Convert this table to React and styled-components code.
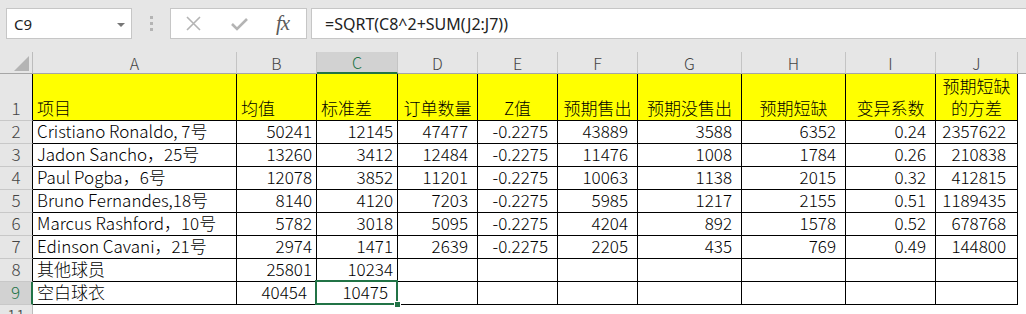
import React from 'react';
import styled, { createGlobalStyle, css } from 'styled-components';

const GREEN = '#217346';

const GlobalStyle = createGlobalStyle`
    html, body {
        margin: 0;
        padding: 0;
        background: #ffffff;
    }
    body {
        font-family: 'Noto Sans CJK SC', 'Noto Sans', sans-serif;
    }
`;

const Page = styled.div`
    width: 1026px;
    height: 314px;
    overflow: hidden;
    background: #ffffff;
`;

const FormulaBar = styled.div`
    height: 52px;
    box-sizing: border-box;
    padding: 8px 0 0 6px;
    background: #e6e6e6;
    display: flex;
    align-items: flex-start;
`;

const NameBox = styled.div`
    width: 126px;
    height: 31px;
    box-sizing: border-box;
    background: #ffffff;
    border: 1px solid #c6c6c6;
    display: flex;
    align-items: center;
    justify-content: space-between;
    padding: 0 6px 0 7px;
    font-family: 'Noto Sans', 'Open Sans', sans-serif;
    font-size: 15px;
    color: #222;
`;

const Caret = styled.span`
    width: 0;
    height: 0;
    border-left: 4px solid transparent;
    border-right: 4px solid transparent;
    border-top: 4px solid #777;
    margin-top: 2px;
`;

const Grip = styled.div`
    width: 38px;
    height: 31px;
    display: flex;
    flex-direction: column;
    align-items: center;
    justify-content: center;
    gap: 3px;
    span {
        width: 3px;
        height: 3px;
        background: #b4b4b4;
    }
`;

const ButtonBox = styled.div`
    width: 137px;
    height: 31px;
    box-sizing: border-box;
    background: #ffffff;
    border: 1px solid #c6c6c6;
    display: flex;
    align-items: center;
    padding-left: 15px;
    gap: 30px;
`;

const Fx = styled.span`
    font-family: 'Liberation Serif', serif;
    font-style: italic;
    font-size: 21px;
    line-height: 21px;
    color: #5a5a5a;
    letter-spacing: -1px;
    margin-left: -2px;
`;

const FormulaInput = styled.div`
    flex: 1;
    height: 31px;
    margin-left: 4px;
    box-sizing: border-box;
    background: #ffffff;
    border: 1px solid #c6c6c6;
    border-right: none;
    display: flex;
    align-items: center;
    padding-left: 13px;
    font-family: 'Noto Sans', 'Open Sans', sans-serif;
    font-size: 16px;
    color: #222;
`;

const Sheet = styled.div`
    display: grid;
    grid-template-columns: 33px 204px 80px 81px 80px 80px 80px 104px 104px 90px 82px 1fr;
    grid-template-rows: 22px 47px repeat(9, 23px);
    font-size: 17px;
    font-weight: 300;
`;

const Corner = styled.div`
    background: #e6e6e6;
    border-right: 1px solid #bcbcbc;
    border-bottom: 1px solid #a6a6a6;
    box-sizing: border-box;
    display: flex;
    align-items: flex-end;
    justify-content: flex-end;
    padding: 0 3px 2px 0;
    &::after {
        content: '';
        width: 0;
        height: 0;
        border-left: 15px solid transparent;
        border-bottom: 15px solid #b4b4b4;
    }
`;

const ColHeader = styled.div`
    box-sizing: border-box;
    background: ${p => (p.$active ? '#d2d2d2' : '#e6e6e6')};
    color: ${p => (p.$active ? GREEN : '#444')};
    border-right: 1px solid #c4c4c4;
    border-bottom: ${p => (p.$active ? `2px solid ${GREEN}` : '1px solid #a6a6a6')};
    display: flex;
    align-items: center;
    justify-content: center;
    font-size: 16px;
    line-height: 20px;
`;

const RowHeader = styled.div`
    box-sizing: border-box;
    background: ${p => (p.$active ? '#d2d2d2' : '#e6e6e6')};
    color: ${p => (p.$active ? GREEN : '#444')};
    border-bottom: 1px solid #c8c8c8;
    border-right: ${p =>
        p.$active ? `2px solid ${GREEN}` : p.$data ? '1px solid #000' : '1px solid #bcbcbc'};
    display: flex;
    align-items: flex-end;
    justify-content: center;
    line-height: 20px;
    padding-bottom: 2px;
`;

const Cell = styled.div`
    box-sizing: border-box;
    position: relative;
    background: ${p => (p.$yellow ? '#ffff00' : '#ffffff')};
    border-right: 1px solid #000;
    border-bottom: 1px solid #000;
    display: flex;
    align-items: flex-end;
    justify-content: ${p => p.$align};
    text-align: ${p => (p.$align === 'center' ? 'center' : 'left')};
    padding: 0 ${p => p.$pad}px 2px 4px;
    line-height: 20px;
    color: #000;
    white-space: ${p => (p.$wrap ? 'normal' : 'nowrap')};
    ${p =>
        p.$wrap &&
        css`
            line-height: 22px;
            padding: 0 4px 1px 4px;
        `}
    ${p =>
        p.$selected &&
        css`
            &::after {
                content: '';
                position: absolute;
                top: -2px;
                left: -2px;
                right: -1px;
                bottom: -1px;
                border: 2px solid ${GREEN};
                pointer-events: none;
            }
            &::before {
                content: '';
                position: absolute;
                right: -4px;
                bottom: -4px;
                width: 5px;
                height: 5px;
                background: ${GREEN};
                border: 1px solid #fff;
                z-index: 2;
            }
        `}
`;

const Blank = styled.div`
    background: ${p => (p.$header ? '#e6e6e6' : '#ffffff')};
    border-bottom: ${p => (p.$header ? '1px solid #a6a6a6' : 'none')};
    box-sizing: border-box;
`;

const columns = ['A', 'B', 'C', 'D', 'E', 'F', 'G', 'H', 'I', 'J'];
const headers = ['项目', '均值', '标准差', '订单数量', 'Z值', '预期售出', '预期没售出', '预期短缺', '变异系数', '预期短缺的方差'];
const pads = [4, 4, 4, 9, 9, 9, 9, 9, 9, 11];

const z = '-0.2275';
const rows = [
    ['Cristiano Ronaldo, 7号', 50241, 12145, 47477, z, 43889, 3588, 6352, '0.24', 2357622],
    ['Jadon Sancho，25号', 13260, 3412, 12484, z, 11476, 1008, 1784, '0.26', 210838],
    ['Paul Pogba，6号', 12078, 3852, 11201, z, 10063, 1138, 2015, '0.32', 412815],
    ['Bruno Fernandes,18号', 8140, 4120, 7203, z, 5985, 1217, 2155, '0.51', 1189435],
    ['Marcus Rashford，10号', 5782, 3018, 5095, z, 4204, 892, 1578, '0.52', 678768],
    ['Edinson Cavani，21号', 2974, 1471, 2639, z, 2205, 435, 769, '0.49', 144800],
    ['其他球员', 25801, 10234, '', '', '', '', '', '', ''],
    ['空白球衣', 40454, 10475, '', '', '', '', '', '', ''],
];

const CancelIcon = () => (
    <svg width="15" height="15" viewBox="0 0 15 15">
        <path d="M1 1 L14 14 M14 1 L1 14" stroke="#b4b4b4" strokeWidth="1.6" fill="none" />
    </svg>
);

const CheckIcon = () => (
    <svg width="17" height="14" viewBox="0 0 17 14">
        <path d="M1 7 L6 12 L16 2" stroke="#b4b4b4" strokeWidth="2.6" fill="none" />
    </svg>
);

const App = () => {
    return (
        <Page>
            <GlobalStyle />
            <FormulaBar>
                <NameBox>
                    <span>C9</span>
                    <Caret />
                </NameBox>
                <Grip>
                    <span />
                    <span />
                    <span />
                </Grip>
                <ButtonBox>
                    <CancelIcon />
                    <CheckIcon />
                    <Fx>fx</Fx>
                </ButtonBox>
                <FormulaInput>=SQRT(C8^2+SUM(J2:J7))</FormulaInput>
            </FormulaBar>
            <Sheet>
                <Corner />
                {columns.map(c => (
                    <ColHeader key={c} $active={c === 'C'}>
                        {c}
                    </ColHeader>
                ))}
                <Blank $header />

                <RowHeader $data>1</RowHeader>
                {headers.map((h, i) => (
                    <Cell
                        key={h}
                        $yellow
                        $align={i < 3 ? 'flex-start' : 'center'}
                        $pad={4}
                        $wrap={i === 9}
                    >
                        {h}
                    </Cell>
                ))}
                <Blank />

                {rows.map((r, ri) => {
                    const rowNo = ri + 2;
                    return (
                        <React.Fragment key={rowNo}>
                            <RowHeader $data $active={rowNo === 9}>
                                {rowNo}
                            </RowHeader>
                            {r.map((v, ci) => (
                                <Cell
                                    key={ci}
                                    $align={ci === 0 ? 'flex-start' : 'flex-end'}
                                    $pad={rowNo === 9 && ci > 0 ? 9 : pads[ci]}
                                    $selected={rowNo === 9 && ci === 2}
                                >
                                    {v}
                                </Cell>
                            ))}
                            <Blank />
                        </React.Fragment>
                    );
                })}

                <RowHeader>11</RowHeader>
            </Sheet>
        </Page>
    );
};

export default App;
